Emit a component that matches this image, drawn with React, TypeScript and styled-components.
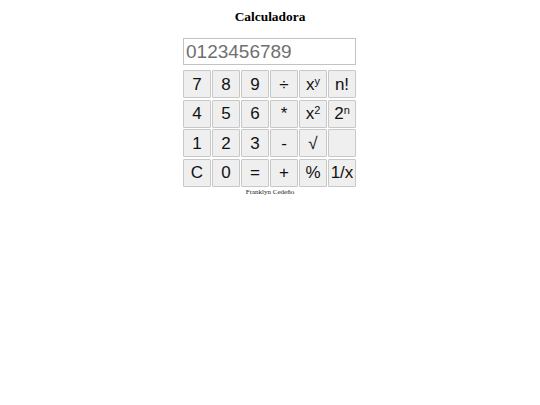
import React from "react";
import styled, { createGlobalStyle } from "styled-components";

const Global = createGlobalStyle`
  html, body { margin: 0; padding: 0; background: #ffffff; }
  body { font-family: "Liberation Serif", "Times New Roman", serif; }
`;

const Page = styled.div`
  display: flex;
  flex-direction: column;
  align-items: center;
  width: 540px;
`;

const Title = styled.h1`
  margin: 9px 0 0 0;
  font-family: "Liberation Serif", "Times New Roman", serif;
  font-weight: bold;
  font-size: 13.4px;
  line-height: 15px;
  color: #000;
`;

const Calc = styled.div`
  margin-top: 14px;
  margin-right: 1px;
  width: 173px;
  display: flex;
  flex-direction: column;
  gap: 5px;
`;

const Display = styled.input`
  box-sizing: border-box;
  width: 173px;
  height: 27px;
  margin: 0;
  padding: 0 2px;
  border: 1px solid #c3c3c3;
  background: #fff;
  font-family: "Liberation Sans", Arial, sans-serif;
  font-size: 19px;
  color: #707070;
  outline: none;
  &::placeholder { color: #707070; opacity: 1; }
`;

const Keys = styled.div`
  display: grid;
  grid-template-columns: repeat(6, 28px);
  grid-auto-rows: 28px;
  column-gap: 1px;
  row-gap: 1.67px;
`;

const Key = styled.button`
  box-sizing: border-box;
  width: 28px;
  height: 28px;
  margin: 0;
  padding: 0;
  border: 1px solid #c8c8c8;
  border-radius: 1px;
  background: #efefef;
  font-family: "Liberation Sans", Arial, sans-serif;
  font-size: 17px;
  color: #111;
  display: flex;
  align-items: center;
  justify-content: center;
  line-height: 1;
  sup { font-size: 11px; position: relative; top: -3px; vertical-align: top; }
`;

const Footer = styled.div`
  margin-top: 1px;
  font-family: "Liberation Serif", "Times New Roman", serif;
  font-size: 7px;
  color: #222;
`;

type K = { label: React.ReactNode };

const keys: K[] = [
  { label: "7" }, { label: "8" }, { label: "9" }, { label: "÷" },
  { label: <>x<sup>y</sup></> }, { label: "n!" },
  { label: "4" }, { label: "5" }, { label: "6" }, { label: "*" },
  { label: <>x<sup>2</sup></> }, { label: <>2<sup>n</sup></> },
  { label: "1" }, { label: "2" }, { label: "3" }, { label: "-" },
  { label: "√" }, { label: "" },
  { label: "C" }, { label: "0" }, { label: "=" }, { label: "+" },
  { label: "%" }, { label: "1/x" },
];

export default function App() {
  return (
    <>
      <Global />
      <Page>
        <Title>Calculadora</Title>
        <Calc>
          <Display placeholder="0123456789" readOnly />
          <Keys>
            {keys.map((k, i) => (
              <Key key={i}>{k.label}</Key>
            ))}
          </Keys>
        </Calc>
        <Footer>Franklyn Cedeño</Footer>
      </Page>
    </>
  );
}
